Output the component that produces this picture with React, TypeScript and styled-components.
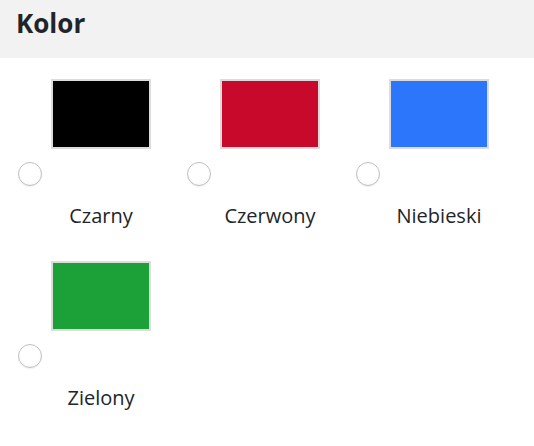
import React from "react";
import styled, { createGlobalStyle } from "styled-components";

const Global = createGlobalStyle`
  html, body { margin: 0; padding: 0; background: #ffffff; }
  body { font-family: "Open Sans", "Liberation Sans", sans-serif; color: #212529; }
`;

const Page = styled.div`
  width: 534px;
  height: 446px;
  overflow: hidden;
  background: #ffffff;
`;

const Header = styled.div`
  height: 58px;
  box-sizing: border-box;
  padding: 8px 16px 0;
  background: #f2f2f2;
`;

const Title = styled.h4`
  margin: 0;
  font-size: 26px;
  line-height: 1.2;
  font-weight: 700;
  color: #212529;
`;

const Grid = styled.div`
  display: grid;
  grid-template-columns: repeat(3, 169px);
  row-gap: 33px;
  padding: 21px 0 0 18px;
`;

const Item = styled.label`
  display: flex;
  flex-direction: column;
  align-items: flex-start;
  cursor: pointer;
`;

const Swatch = styled.span<{ $color: string }>`
  display: block;
  width: 100px;
  height: 70px;
  box-sizing: border-box;
  margin-left: 33px;
  border: 2px solid #dcdcdc;
  background: ${(p) => p.$color};
`;

const Radio = styled.input`
  appearance: none;
  -webkit-appearance: none;
  margin: 13px 0 0 0;
  width: 24px;
  height: 24px;
  box-sizing: border-box;
  border-radius: 50%;
  border: 1px solid #bfbfbf;
  background: radial-gradient(circle at 50% 40%, #ffffff 55%, #f1f1f1 100%);
  box-shadow: 0 1px 1px rgba(0, 0, 0, 0.06);
`;

const Name = styled.span`
  display: block;
  width: 166px;
  margin-top: 18px;
  text-align: center;
  font-size: 20px;
  line-height: 24px;
  color: #212529;
`;

const colors = [
  { name: "Czarny", color: "#000000" },
  { name: "Czerwony", color: "#c8092b" },
  { name: "Niebieski", color: "#2b76fb" },
  { name: "Zielony", color: "#1ba138" },
];

export default function App() {
  return (
    <Page>
      <Global />
      <Header>
        <Title>Kolor</Title>
      </Header>
      <Grid>
        {colors.map((c) => (
          <Item key={c.name}>
            <Swatch $color={c.color} />
            <Radio type="radio" name="kolor" value={c.name} />
            <Name>{c.name}</Name>
          </Item>
        ))}
      </Grid>
    </Page>
  );
}
